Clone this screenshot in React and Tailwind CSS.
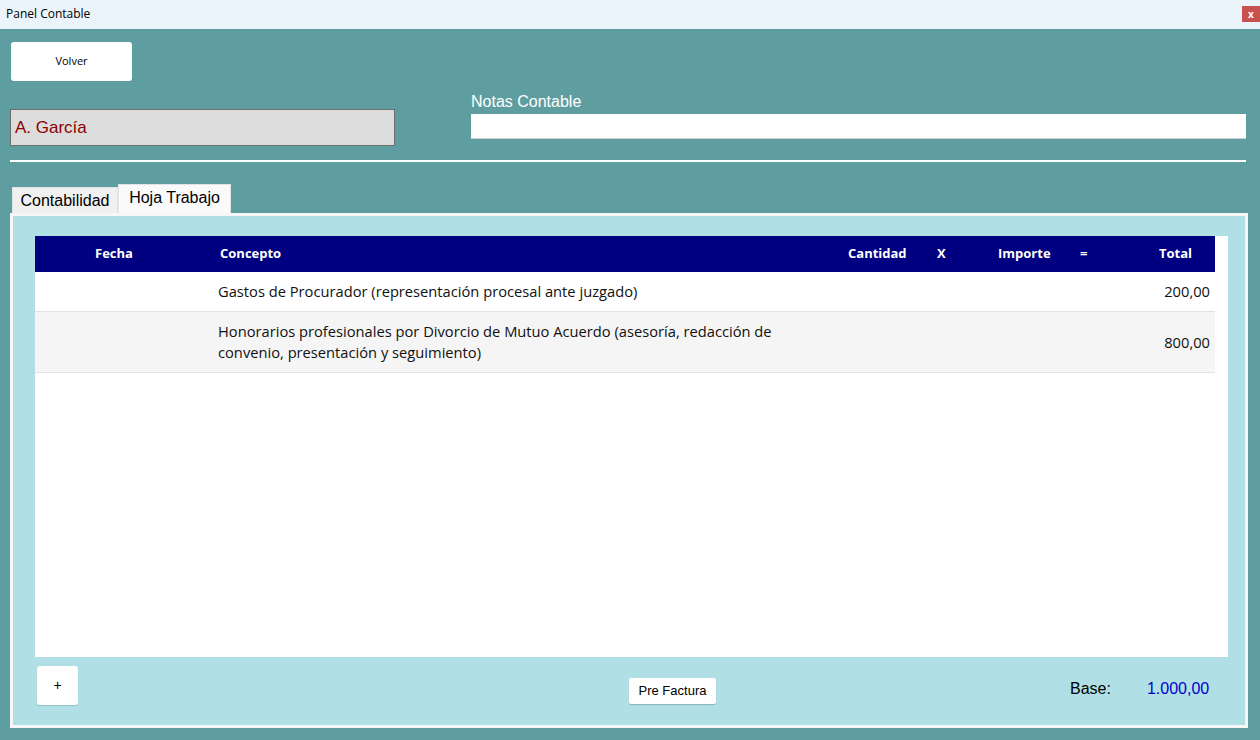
import React from "react";

const seg = { fontFamily: '"Open Sans", "Noto Sans", sans-serif' };
const ari = { fontFamily: '"Liberation Sans", Arial, sans-serif' };

const rows = [
  { concepto: "Gastos de Procurador (representación procesal ante juzgado)", total: "200,00", bg: "bg-white" },
  {
    concepto:
      "Honorarios profesionales por Divorcio de Mutuo Acuerdo (asesoría, redacción de convenio, presentación y seguimiento)",
    total: "800,00",
    bg: "bg-[#f5f5f5]",
  },
];

export default function App() {
  return (
    <div className="w-[1260px] h-[740px] bg-[#5f9ea0] flex flex-col overflow-hidden">
      {/* title bar */}
      <div className="h-[29px] bg-[#ebf4fa] flex items-start justify-between shrink-0">
        <div className="text-[12px] text-black pl-[6px] pt-[6px] leading-[16px]" style={seg}>
          Panel Contable
        </div>
        <div
          className="mt-[6px] w-[18px] h-[16px] bg-[#c8504e] text-white text-[10px] font-bold flex items-center justify-center leading-none"
          style={seg}
        >
          x
        </div>
      </div>

      <div className="flex flex-col px-[10px]">
        <button
          className="mt-[13px] ml-[1px] w-[121px] h-[39px] rounded-[3px] bg-white text-[11px] text-black flex items-center justify-center"
          style={seg}
        >
          Volver
        </button>

        <div className="flex items-start mt-[12px]">
          <div
            className="mt-[16px] w-[385px] h-[37px] bg-[#dcdcdc] border border-[#6e6e6e] text-[#8b0000] text-[17px] flex items-center pl-[4px]"
            style={ari}
          >
            A. García
          </div>
          <div className="ml-[76px] flex flex-col">
            <div className="text-white text-[16px] leading-[18px] h-[21px]" style={ari}>
              Notas Contable
            </div>
            <div className="w-[775px] h-[25px] bg-white border-b border-[#cfcfcf]"></div>
          </div>
        </div>

        <div className="mt-[14px] h-[2px] w-[1236px] bg-white"></div>

        {/* tabs */}
        <div className="flex items-end mt-[22px] pl-[2px] h-[29px]">
          <div
            className="h-[26px] w-[106px] bg-[#f0f0f0] border border-b-0 border-[#e3e3e3] text-[16px] text-black flex items-center justify-center pt-[1px]"
            style={ari}
          >
            Contabilidad
          </div>
          <div
            className="h-[29px] w-[113px] bg-[#fafafa] border border-b-0 border-[#e3e3e3] text-[16px] text-black flex items-center justify-center pb-[2px]"
            style={ari}
          >
            Hoja Trabajo
          </div>
        </div>

        {/* panel */}
        <div className="w-[1238px] h-[515px] border-[3px] border-[#f6f6f6] bg-[#b0e0e6] flex flex-col pl-[22px] pt-[20px]">
          <div className="w-[1193px] h-[421px] bg-white">
            <div className="w-[1180px]">
              {/* header */}
              <div
                className="flex h-[36px] bg-[#000080] text-white text-[13px] font-bold items-center"
                style={seg}
              >
                <div className="w-[158px] text-center">Fecha</div>
                <div className="w-[632px] pl-[27px]">Concepto</div>
                <div className="w-[102px] pl-[23px]">Cantidad</div>
                <div className="w-[43px] pl-[10px]">X</div>
                <div className="w-[100px] pl-[28px]">Importe</div>
                <div className="w-[30px] pl-[10px]">=</div>
                <div className="w-[115px] pl-[59px]">Total</div>
              </div>
              {rows.map((r, i) => (
                <div
                  key={i}
                  className={`flex items-center ${r.bg} border-b border-[#e2e2e2] py-[9px] text-[14.7px] text-[#111] leading-[21px]`}
                  style={seg}
                >
                  <div className="w-[158px]"></div>
                  <div className="w-[632px] pl-[25px] pr-[30px]">{r.concepto}</div>
                  <div className="w-[102px]"></div>
                  <div className="w-[43px]"></div>
                  <div className="w-[100px]"></div>
                  <div className="w-[30px]"></div>
                  <div className="w-[115px] text-right pr-[5px]">{r.total}</div>
                </div>
              ))}
            </div>
          </div>

          {/* bottom bar */}
          <div className="flex items-start mt-[9px]">
            <button
              className="ml-[2px] w-[41px] h-[39px] rounded-[3px] bg-white text-[14px] text-black flex items-center justify-center shadow-[0_1px_1px_rgba(0,0,0,0.15)]"
              style={ari}
            >
              +
            </button>
            <button
              className="ml-[551px] mt-[12px] w-[87px] h-[26px] rounded-[2px] bg-white text-[13px] text-black flex items-center justify-center shadow-[0_1px_1px_rgba(0,0,0,0.2)]"
              style={ari}
            >
              Pre Factura
            </button>
            <div className="ml-[354px] mt-[11px] text-[16px] text-black" style={ari}>
              Base:
            </div>
            <div className="ml-[36px] mt-[11px] text-[16px] text-[#0000cd]" style={ari}>
              1.000,00
            </div>
          </div>
        </div>
      </div>
    </div>
  );
}
